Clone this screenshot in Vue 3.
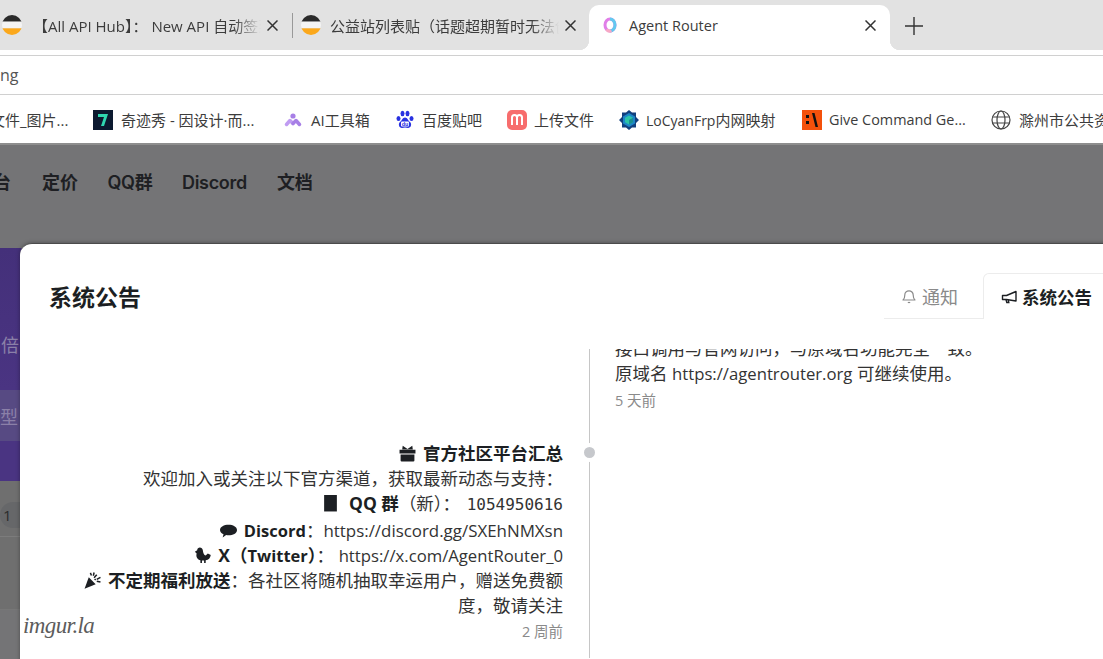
<template>
  <div class="browser">
    <div class="tabstrip">
      <div class="tab first">
        <svg class="fav" viewBox="0 0 18 18"><use href="#tabglobe" /></svg>
        <span class="tab-title">【All API Hub】： New API 自动签到</span>
        <svg class="tab-close" viewBox="0 0 11 11"><path d="M.5.500l10 10M10.500.500l-10 10" /></svg>
      </div>
      <div class="tab-sep"></div>
      <div class="tab second">
        <svg class="fav" viewBox="0 0 18 18"><use href="#tabglobe" /></svg>
        <span class="tab-title">公益站列表贴（话题超期暂时无法创建）</span>
        <svg class="tab-close" viewBox="0 0 11 11"><path d="M.5.500l10 10M10.500.500l-10 10" /></svg>
      </div>
      <div class="tab active">
        <svg class="fav-agent" viewBox="0 0 16 16">
          <ellipse cx="8" cy="8" rx="5" ry="6" fill="none" stroke="#e07fe8" stroke-width="3" />
          <path d="M8 2a5 6 0 0 1 0 12" fill="none" stroke="#62c9ef" stroke-width="3" />
          <path d="M4.500 12.500a5 6 0 0 0 5 1.300" fill="none" stroke="#f7a8c4" stroke-width="3" />
        </svg>
        <span class="active-title">Agent Router</span>
        <svg class="tab-close" viewBox="0 0 11 11"><path d="M.5.500l10 10M10.500.500l-10 10" /></svg>
      </div>
      <svg class="plus" viewBox="0 0 18 18"><path d="M9 0v18M0 9h18" stroke="#333" stroke-width="1.400" /></svg>
      <svg width="0" height="0" class="defs">
        <symbol id="tabglobe" viewBox="0 0 18 18">
          <clipPath id="tabclip"><circle cx="9" cy="9" r="9" /></clipPath>
          <g clip-path="url(#tabclip)">
            <rect width="18" height="6" fill="#2a2a2a" />
            <rect y="6" width="18" height="6" fill="#f4f4f4" />
            <rect y="12" width="18" height="6" fill="#fba81c" />
          </g>
        </symbol>
      </svg>
    </div>
    <div class="strip"></div>
    <div class="address"><span>ng</span></div>
    <div class="bookmarks">
      <span class="mark cut">文件_图片...</span>
      <span class="mark seven">
        <svg viewBox="0 0 20 20">
          <rect width="20" height="20" fill="#0c1a30" />
          <path d="M5 4h10l-4 12H8l3-9H5z" fill="#2fd7b0" />
        </svg>
        奇迹秀 - 因设计·而...
      </span>
      <span class="mark ai">
        <svg viewBox="0 0 20 20">
          <circle cx="10" cy="6" r="2.600" fill="#a77fe6" />
          <path d="M3.500 14.500L7 10.500l3 3" fill="none" stroke="#c09cf2" stroke-width="3.500" stroke-linecap="round" stroke-linejoin="round" />
          <path d="M10 13.500l3-3 3.500 4" fill="none" stroke="#a77fe6" stroke-width="3.500" stroke-linecap="round" stroke-linejoin="round" />
        </svg>
        AI工具箱
      </span>
      <span class="mark baidu">
        <svg viewBox="0 0 20 20" fill="#2932e1">
          <ellipse cx="3.500" cy="8.500" rx="2" ry="2.500" />
          <ellipse cx="7.500" cy="3.500" rx="2" ry="2.700" />
          <ellipse cx="12.500" cy="3.500" rx="2" ry="2.700" />
          <ellipse cx="16.500" cy="8.500" rx="2" ry="2.500" />
          <path d="M10 7.500c-2.500 0-3 3-5 4.500-2.200 2-1 6 2 6 1 0 2-.5 3-.5s2 .5 3 .5c3 0 4.200-4 2-6-2-1.500-2.500-4.500-5-4.500z" />
          <rect x="6" y="11.500" width="8" height="5" rx="1" fill="#fff" />
          <text x="10" y="16" text-anchor="middle" font-size="5.500" font-family="Liberation Sans" font-weight="700" fill="#2932e1">du</text>
        </svg>
        百度贴吧
      </span>
      <span class="mark upload">
        <svg viewBox="0 0 20 20">
          <rect width="20" height="20" rx="5" fill="#f76d6d" />
          <path d="M5 15V7.500a2.500 2.500 0 0 1 5 0V15M10 7.500a2.500 2.500 0 0 1 5 0V15" fill="none" stroke="#fff" stroke-width="2" />
        </svg>
        上传文件
      </span>
      <span class="mark locyan">
        <svg viewBox="0 0 20 20">
          <path d="M10 0l3 2.500h4V7l3 3-3 3v4.500h-4L10 20l-3-2.500H3V13l-3-3 3-3V2.500h4z" fill="#12407e" />
          <path d="M10 3l6 3.500v7L10 17l-6-3.500v-7z" fill="#1d86c7" />
          <path d="M10 5.500l4 2.200v4.600l-4 2.200-4-2.200V7.700z" fill="#2dc5a8" />
          <path d="M10 10l4-2.300v4.600l-4 2.200z" fill="#1a8f90" />
        </svg>
        <span><span class="narrow">LoCyanFrp</span>内网映射</span>
      </span>
      <span class="mark give">
        <svg viewBox="0 0 20 20">
          <rect width="20" height="20" fill="#f4510b" />
          <rect x="4" y="5" width="3" height="3" fill="#111" />
          <rect x="4" y="11" width="3" height="3" fill="#111" />
          <path d="M10 3h2.500L16 17h-2.500z" fill="#111" />
        </svg>
        Give Command Ge...
      </span>
      <span class="mark globe">
        <svg viewBox="0 0 20 20" fill="none" stroke="#444" stroke-width="1.200">
          <circle cx="10" cy="10" r="9" />
          <ellipse cx="10" cy="10" rx="4" ry="9" />
          <path d="M1.500 7h17M1.500 13h17" />
        </svg>
        滁州市公共资源交易
      </span>
    </div>

    <div class="page">
      <nav class="site-nav">
        <span class="cut-nav">台</span>
        <span>定价</span>
        <span class="latin">QQ群</span>
        <span class="latin">Discord</span>
        <span>文档</span>
      </nav>
      <div class="hero">
        <div class="hero-top"><span>倍</span></div>
        <div class="hero-band"><span>型</span></div>
        <div class="hero-end"></div>
      </div>
      <div class="rows">
        <div class="row-one"><span class="badge">1</span></div>
        <div class="row-two"></div>
      </div>

      <section class="modal">
        <header class="modal-head">
          <h2>系统公告</h2>
          <div class="tabs">
            <div class="mtab">
              <svg viewBox="0 0 16 16" fill="none" stroke="#8a8a8a" stroke-width="1.200">
                <path d="M2 12c1.400-1 1.800-2.500 1.800-5a4.200 4.200 0 0 1 8.400 0c0 2.500.4 4 1.800 5z" stroke-linejoin="round" />
                <path d="M6.800 14.500h2.400" />
              </svg>
              通知
            </div>
            <div class="mtab on">
              <svg viewBox="0 0 16 16" fill="none" stroke="#1c1f23" stroke-width="1.400">
                <path d="M15 2.500v9.500L5.500 10.500H1.500v-4h4z" stroke-linejoin="round" />
                <path d="M5 10.500l.8 3h2l-.5-2.600" />
              </svg>
              系统公告
            </div>
          </div>
        </header>
        <div class="timeline">
          <div class="top-row">
            <div class="right-col">
              <p>接口调用与官网访问，与原域名功能完全一致。<br />原域名 <span class="link">https://agentrouter.org</span> 可继续使用。</p>
              <time>5 天前</time>
            </div>
          </div>
          <div class="item">
            <div class="left-col">
              <p class="line">
                <svg class="ico" viewBox="0 0 16 16" fill="#1c1f23">
                  <path d="M.5 4.500h15V8H.5zM1.500 9h13v5.500a1 1 0 0 1-1 1h-11a1 1 0 0 1-1-1z" />
                  <path d="M3.500 .8l4.500 3 4.500-3 .5 3.500H3z" />
                </svg>
                <b>官方社区平台汇总</b>
              </p>
              <p class="line">欢迎加入或关注以下官方渠道，获取最新动态与支持：</p>
              <p class="line qq">
                <svg class="ico" viewBox="0 0 16 16" fill="#1c1f23"><path d="M2 0h12v15.500H2z" /></svg>
                <b>QQ 群</b>（新）： <code>1054950616</code>
              </p>
              <p class="line">
                <svg class="ico" viewBox="0 0 16 16" fill="#1c1f23"><path d="M8 2.500c4.200 0 8 1.900 8 5s-3.800 5-8 5c-.8 0-1.500 0-2.200-.2L2.500 14.500l.8-3C1.300 10.600 0 9.200 0 7.500 0 4.400 3.800 2.500 8 2.500z" /></svg>
                <b class="small-b">Discord</b>：<span class="link wide">https://discord.gg/SXEhNMXsn</span>
              </p>
              <p class="line">
                <svg class="ico" viewBox="0 0 16 16" fill="#1c1f23">
                  <path d="M3 3C3 1.500 4.300.5 5.500.5 7 .5 8 1.500 8.300 3c.4 2.500 1 4.500 2.700 5l2-2 2.800 1.500c-.5 3-2 4.500-4.800 5V15H9.500v-2.200H7.500V15H6v-2.500C3.500 11.500 1.500 9.500 2.500 6L.8 4.500z" />
                </svg>
                <b>X（<span class="small-b">Twitter</span>）</b>： <span class="link">https://x.com/AgentRouter_0</span>
              </p>
              <p class="line">
                <svg class="ico" viewBox="0 0 16 16" fill="#1c1f23">
                  <path d="M4.500 5l6.500 6.500L.5 15.800z" />
                  <path d="M6 .8l1 2.500M9.500.5L8.800 3.500M12 2.500L9.500 5.500M15.500 5l-3.500 2M15.500 9.500l-3.500-.7M10 6.500l1 1" stroke="#1c1f23" stroke-width="1.400" fill="none" />
                </svg>
                <b>不定期福利放送</b>：各社区将随机抽取幸运用户，赠送免费额度，敬请关注
              </p>
              <time>2 周前</time>
            </div>
            <div class="axis"><i class="dot"></i></div>
            <div class="spacer"></div>
          </div>
        </div>
        <span class="watermark">imgur.la</span>
      </section>
    </div>
  </div>
</template>

<script setup>
</script>

<style>
html, body { margin: 0; height: 100%; overflow: hidden; background: #fff; }
</style>

<style scoped>
.browser {
  width: 1103px;
  height: 659px;
  overflow: hidden;
  display: flex;
  flex-direction: column;
  font-family: "Open Sans", "Noto Sans CJK SC", sans-serif;
  color: #333;
}
.defs { position: absolute; }

.tabstrip {
  height: 50px;
  flex: none;
  background: #e2e2e2;
  display: flex;
  align-items: flex-end;
  overflow: hidden;
}
.tab {
  height: 45px;
  padding-bottom: 5px;
  display: flex;
  align-items: center;
  flex: none;
  box-sizing: border-box;
  font-size: 14.500px;
  color: #3c3c3c;
}
.first { width: 299px; margin-left: -7px; padding-left: 9px; }
.second { width: 296px; padding-left: 8px; }
.fav { width: 20px; height: 20px; flex: none; }
.tab-title {
  font-size: 15px;
  white-space: nowrap;
  overflow: hidden;
  flex: none;
  -webkit-mask-image: linear-gradient(to right, #000 88%, transparent);
  mask-image: linear-gradient(to right, #000 88%, transparent);
}
.first .tab-title { margin-left: 11px; width: 228px; }
.second .tab-title { margin-left: 9px; width: 229px; }
.tab-close {
  width: 11px;
  height: 11px;
  flex: none;
  margin-left: 6px;
  fill: none;
  stroke: #333;
  stroke-width: 1.500;
}
.tab-sep { width: 1px; height: 25px; background: #999; margin-bottom: 12px; flex: none; }
.active {
  width: 301px;
  background: #fff;
  border-radius: 10px 10px 0 0;
  padding-left: 13px;
  position: relative;
}
.active::before,
.active::after {
  content: "";
  position: absolute;
  bottom: 0;
  width: 10px;
  height: 10px;
}
.active::before { left: -10px; background: radial-gradient(circle at 0 0, transparent 10px, #fff 10.500px); }
.active::after { right: -10px; background: radial-gradient(circle at 100% 0, transparent 10px, #fff 10.500px); }
.fav-agent { width: 16px; height: 16px; flex: none; }
.active-title { margin-left: 11px; width: 236px; flex: none; }
.active .tab-close { margin-left: 0; }
.plus { width: 18px; height: 18px; margin: 0 0 15px 15px; flex: none; }
.strip { height: 5px; background: #fff; border-bottom: 1px solid #d0d0d0; flex: none; }
.address {
  height: 38px;
  flex: none;
  background: #fff;
  border-bottom: 1px solid #d0d0d0;
  display: flex;
  align-items: center;
  font-size: 16px;
  color: #555;
}
.bookmarks {
  height: 47px;
  padding-top: 1px;
  flex: none;
  background: #fff;
  border-bottom: 2px solid #8e8e8e;
  display: flex;
  align-items: center;
  overflow: hidden;
  font-size: 15px;
  color: #3c3c3c;
  white-space: nowrap;
}
.mark { display: flex; align-items: center; flex: none; }
.mark svg { width: 20px; height: 20px; margin-right: 7px; flex: none; }
.cut { width: 103px; margin-left: -10px; }
.seven { width: 190px; }
.seven svg, .ai svg, .globe svg { margin-right: 8px; }
.ai { width: 112px; }
.baidu { width: 112px; }
.upload { width: 112px; }
.locyan { width: 183px; }
.narrow { font-size: 14px; }
.give { width: 189px; font-size: 14.400px; }

.page {
  flex: 1;
  position: relative;
  background: #747476;
  overflow: hidden;
}
.site-nav {
  height: 103px;
  display: flex;
  align-items: center;
  gap: 30px;
  font-family: Inter, "Noto Sans CJK SC", sans-serif;
  font-weight: 600;
  font-size: 18px;
  line-height: 24px;
  color: #1e1f23;
  padding-bottom: 28px;
  box-sizing: border-box;
}
.site-nav span { height: 24px; }
.latin { letter-spacing: -0.3px; margin-left: -0.500px; }
.cut-nav { margin-left: -7px; width: 19px; overflow: hidden; }
.hero { height: 233px; display: flex; flex-direction: column; color: #8b80a8; font-size: 18px; }
.hero-top {
  height: 142px;
  background: linear-gradient(#44307a, #4a3482);
  display: flex;
  align-items: center;
  padding: 50px 0 0 1px;
  box-sizing: border-box;
}
.hero-band {
  height: 51px;
  background: #574a83;
  display: flex;
  align-items: center;
}
.hero-end { flex: 1; background: #4a3482; }
.rows { background: #6f6f6f; }
.row-one {
  height: 56px;
  padding-top: 21px;
  box-sizing: border-box;
  border-bottom: 1px solid #7c7c7c;
}
.row-two { height: 72px; border-bottom: 1px solid #777; }
.badge {
  display: block;
  width: 20px;
  height: 26px;
  line-height: 26px;
  background: #666769;
  border-radius: 13px 0 0 13px;
  text-indent: 3px;
  font-size: 15px;
  color: #2c2c2c;
}

.modal {
  position: absolute;
  left: 20px;
  top: 98px;
  width: 1100px;
  height: 440px;
  background: #fff;
  border-radius: 12px 0 0 0;
  border-top: 1px solid #4b4b4b;
  box-shadow: 0 0 4px rgba(0, 0, 0, 0.35);
  box-sizing: border-box;
}
.modal-head {
  height: 105px;
  display: flex;
  justify-content: space-between;
  padding: 29px 0 0 29px;
  box-sizing: border-box;
}
.modal-head h2 {
  margin: 0;
  font-family: Inter, "Noto Sans CJK SC", sans-serif;
  font-size: 23px;
  line-height: 50px;
  height: 50px;
  font-weight: 700;
  color: #1c1f23;
}
.tabs { display: flex; height: 46px; }
.mtab {
  width: 99px;
  display: flex;
  align-items: center;
  justify-content: flex-start;
  padding-left: 17px;
  gap: 5px;
  font-size: 18px;
  color: #8a8a8a;
  border-bottom: 1px solid #ececec;
  box-sizing: border-box;
}
.mtab svg { width: 16px; height: 16px; flex: none; }
.mtab.on {
  width: 137px;
  color: #1c1f23;
  font-size: 17.500px;
  font-weight: 700;
  border: 1px solid #ececec;
  border-bottom: none;
  border-radius: 6px 0 0 0;
  padding-left: 17px;
}
.timeline {
  height: 309px;
  overflow: hidden;
  font-size: 17.500px;
  line-height: 25px;
  color: #333;
}
.timeline p { margin: 0; }
.link { font-size: 16.700px; }
.link.wide { font-size: 16.900px; }
.top-row {
  height: 105px;
  margin-top: -13px;
  margin-left: 569px;
  padding-left: 25px;
  border-left: 1px solid #c6c6c6;
}
time { display: block; font-size: 14.500px; color: #8a8a8a; line-height: 22px; margin-top: 4px; }
.item { display: grid; grid-template-columns: 570px 1fr; position: relative; }
.left-col { width: 490px; margin-left: 53px; text-align: right; }
.left-col time { margin-top: 3px; }
.line .ico { width: 17px; height: 17px; vertical-align: -2px; margin-right: 7px; }
.line.qq .ico { margin-right: 10px; }
.line b { font-weight: 700; color: #1c1f23; }
.line .small-b { font-size: 16.500px; }
.qq { height: 27px; }
code { font-family: "DejaVu Sans Mono", monospace; font-size: 16px; margin-left: 2px; }
.axis { position: absolute; left: 569px; top: 0; bottom: -60px; width: 1px; background: #c6c6c6; }
.dot {
  position: absolute;
  left: -9px;
  top: 2px;
  width: 11px;
  height: 11px;
  border-radius: 50%;
  background: #c6c8cc;
  border: 4px solid #fff;
}
.watermark {
  position: absolute;
  left: 3px;
  top: 369px;
  font-family: "Liberation Serif", serif;
  font-style: italic;
  font-size: 23px;
  letter-spacing: -0.600px;
  color: #5c5c5c;
}
</style>
